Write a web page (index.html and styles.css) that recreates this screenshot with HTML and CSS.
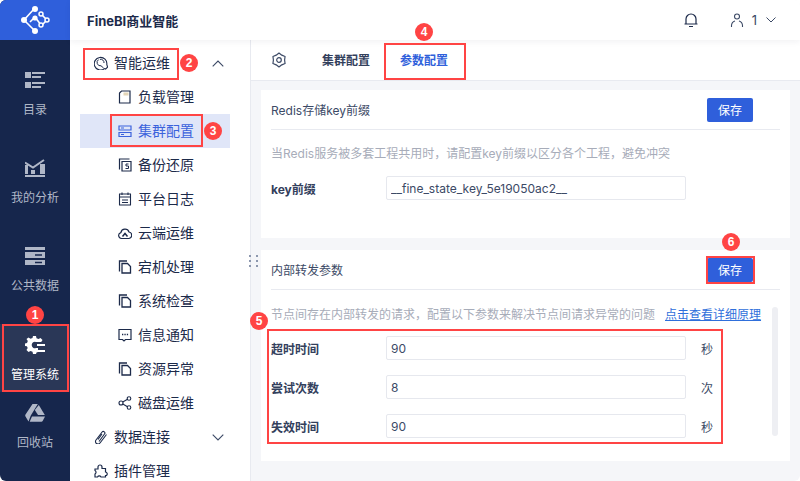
FILE: index.html
```html
<!DOCTYPE html>
<html lang="zh-CN">
<head>
<meta charset="utf-8">
<title>FineBI商业智能</title>
<link rel="stylesheet" href="styles.css">
</head>
<body>
<svg class="defs" aria-hidden="true">
  <symbol id="i-doc" viewBox="0 0 14 14"><path d="M1.500 11.500V1h7.500M4 13V3.500h5.500L12.500 6.500V13Z" fill="none" stroke="currentColor" stroke-width="1.300"/></symbol>
</svg>
<div class="app">
  <nav class="rail">
    <div class="logo">
      <svg class="logo-svg" viewBox="0 0 30 30"><g stroke="#fff" stroke-width="1.600" fill="none"><path d="M13 4 3 15l11 11M9 17l5-5 6 8"/><path d="M20 9l6 6-6 6"/></g><g fill="#fff"><circle cx="14" cy="4" r="3"/><circle cx="3" cy="15" r="3"/><circle cx="14" cy="26" r="3"/><circle cx="14" cy="13" r="2.600"/></g><g fill="#2f5fdb" stroke="#fff" stroke-width="1.500"><circle cx="20" cy="9" r="2"/><circle cx="26" cy="15" r="2"/><circle cx="20" cy="20" r="2"/></g></svg>
    </div>
    <a class="rail-item">
      <svg class="rail-icon" viewBox="0 0 20 18"><path fill="currentColor" d="M0 1h6v6H0zM7 1h13v2H7zM7 5h9v2H7zM0 11h6v6H0zM7 11h13v2H7zM7 15h9v2H7z"/></svg>
      <span>目录</span>
    </a>
    <a class="rail-item">
      <svg class="rail-icon" viewBox="0 0 20 18"><path fill="none" stroke="currentColor" stroke-width="2" d="M0 3.500 8 8.500 19 1"/><path fill="currentColor" d="M0 6h3v9H0zM6 11h4v4H6zM15 5h5v10h-5zM0 16h20v2H0z"/></svg>
      <span>我的分析</span>
    </a>
    <a class="rail-item">
      <svg class="rail-icon" viewBox="0 0 20 18"><path fill="currentColor" fill-rule="evenodd" d="M0 0h20v3H0zM0 5h20v6H0zM10 7.300v1.500h7V7.300zM0 13h20v5H0zM10 14.800v1.400h7v-1.400z"/></svg>
      <span>公共数据</span>
    </a>
    <a class="rail-item active">
      <svg class="rail-icon" viewBox="0 0 20 18"><path fill="currentColor" d="M8 0h3l.5 2.300 2 .8L15.500 2l2 2-1.300 2H11a3.200 3.200 0 1 0 0 6h2v4l-1.500.5L11 18H8l-.5-2.300-2-.8L3.500 16l-2-2 1.200-2-.8-1.800L0 10V7.500l2-.5.800-2L1.500 3l2-1.500 2 1.200 2-.8zM12 8h8v2h-8zM12 14h8v2h-8z"/></svg>
      <span>管理系统</span>
    </a>
    <a class="rail-item">
      <svg class="rail-icon" viewBox="0 0 20 18"><g fill="currentColor"><path d="M7.500 0h5.300L5.800 11.500 3.500 17.500.5 12.500a2 2 0 0 1 0-2z"/><path d="M13.800 1 19.800 11h-6.800L9.800 6z"/><path d="M7 12.600h13L17.800 16.800a2 2 0 0 1-1.500 1H4.700z"/></g></svg>
      <span>回收站</span>
    </a>
  </nav>

  <div class="main">
    <header class="topbar">
      <div class="brand">FineBI商业智能</div>
      <svg class="bell" viewBox="0 0 14 14"><path d="M2 11V6a5 5 0 0 1 10 0v5M.5 11h13M5 13.500h4" fill="none" stroke="currentColor" stroke-width="1.200"/></svg>
      <svg class="user" viewBox="0 0 14 14"><circle cx="7" cy="3.500" r="2.500" fill="none" stroke="currentColor" stroke-width="1.100"/><path d="M1.500 14v-1.500A5 5 0 0 1 5 8M12.500 14v-1.500A5 5 0 0 0 9 8" fill="none" stroke="currentColor" stroke-width="1.100"/></svg>
      <span class="user-name">1</span>
      <svg class="user-caret" viewBox="0 0 10 6"><path d="M.5.500 5 5 9.500.500" fill="none" stroke="currentColor"/></svg>
    </header>

    <div class="body">
      <aside class="sidebar">
        <div class="row top">
          <svg class="ico" viewBox="0 0 14 14"><path d="M10.500 12.600A6.300 6.300 0 1 1 12.800 8.500L13.600 11.200 11.600 13Z" fill="none" stroke="currentColor" stroke-width="1.100"/><path d="M4.600 3.600A3.400 3.400 0 0 0 7 9.800L9.600 12M6 3.300A3.400 3.400 0 0 1 10 7" fill="none" stroke="currentColor" stroke-width="1"/></svg>
          <span>智能运维</span>
          <svg class="caret" viewBox="0 0 12 7"><path d="M.7 6.300 6 1l5.300 5.300" fill="none" stroke="currentColor" stroke-width="1.100"/></svg>
        </div>
        <div class="row child">
          <svg class="ico" viewBox="0 0 14 14"><path d="M1.500 13V3l2-2h8.500v12Z" fill="none" stroke="currentColor" stroke-width="1.200"/><path d="M5.500 2.500h5v3h-5z" fill="#e4d6b8"/></svg>
          <span>负载管理</span>
        </div>
        <div class="row child selected">
          <svg class="ico" viewBox="0 0 14 14"><path d="M1 2h12v4H1zM1 8.500h12v4H1z" fill="none" stroke="currentColor" stroke-width="1.200"/><path d="M3 4h3M3 10.500h3" stroke="currentColor"/></svg>
          <span>集群配置</span>
        </div>
        <div class="row child">
          <svg class="ico" viewBox="0 0 14 14"><path d="M1.500 11.500V1h10M4 13V3.500h9V13Z" fill="none" stroke="currentColor" stroke-width="1.200"/><path d="M10.500 6H8v2h2.500v2.500H7.500" fill="none" stroke="currentColor"/></svg>
          <span>备份还原</span>
        </div>
        <div class="row child">
          <svg class="ico" viewBox="0 0 14 14"><path d="M1.500 2h11v11h-11zM1.500 5h11M4 .5V3M10 .5V3M4 8h6M4 10.500h6" fill="none" stroke="currentColor" stroke-width="1.100"/></svg>
          <span>平台日志</span>
        </div>
        <div class="row child">
          <svg class="ico" viewBox="0 0 14 14"><path d="M3.500 12.500a3 3 0 0 1-.6-5.900A4.200 4.200 0 0 1 11 6a3.300 3.300 0 0 1 0 6.500Z" fill="none" stroke="currentColor" stroke-width="1.200"/><path d="M4.500 10.500 7 7.500l2.500 3" fill="none" stroke="currentColor" stroke-width="1.500"/></svg>
          <span>云端运维</span>
        </div>
        <div class="row child"><svg class="ico"><use href="#i-doc"/></svg><span>宕机处理</span></div>
        <div class="row child"><svg class="ico"><use href="#i-doc"/></svg><span>系统检查</span></div>
        <div class="row child">
          <svg class="ico" viewBox="0 0 14 14"><path d="M1 1.500h12v10H7.500L6 13l-1.500-1.500H1Z" fill="none" stroke="currentColor" stroke-width="1.200"/><path d="M4 6.500h1.300M6.400 6.500h1.300M8.800 6.500h1.300" stroke="currentColor" stroke-width="1.300"/></svg>
          <span>信息通知</span>
        </div>
        <div class="row child"><svg class="ico"><use href="#i-doc"/></svg><span>资源异常</span></div>
        <div class="row child">
          <svg class="ico" viewBox="0 0 14 14"><g fill="none" stroke="currentColor" stroke-width="1.100"><circle cx="3" cy="7" r="2"/><circle cx="11" cy="2.500" r="1.800"/><circle cx="11" cy="11.500" r="1.800"/><path d="M4.800 6 9.500 3.300M4.800 8l4.700 2.700"/></g></svg>
          <span>磁盘运维</span>
        </div>
        <div class="row top">
          <svg class="ico" viewBox="0 0 14 14"><path d="M5 11.500 10.500 4a1.500 1.500 0 0 0-2.400-2L2 10a2.500 2.500 0 0 0 4 3l6.500-8.500M8 4l-4 5.500" fill="none" stroke="currentColor" stroke-width="1.100"/></svg>
          <span>数据连接</span>
          <svg class="caret" viewBox="0 0 12 7"><path d="M.7.700 6 6l5.300-5.300" fill="none" stroke="currentColor" stroke-width="1.100"/></svg>
        </div>
        <div class="row top">
          <svg class="ico" viewBox="0 0 14 14"><path d="M1 5h3V3a2 2 0 0 1 4 0v1.500h3.500V8a2 2 0 0 1 1 3.500h-1V13H7a2 2 0 0 0-3.500 0H1V10a2 2 0 0 0 0-3.500Z" fill="none" stroke="currentColor" stroke-width="1.200"/></svg>
          <span>插件管理</span>
        </div>
      </aside>

      <section class="content">
        <div class="tabs">
          <svg class="gear" viewBox="0 0 16 16"><path d="M8 1 10.800 3.150 14.060 4.500 13.600 8 14.060 11.500 10.800 12.850 8 15 5.200 12.850 1.940 11.500 2.400 8 1.940 4.500 5.200 3.150Z" fill="none" stroke="currentColor" stroke-width="1.200" stroke-linejoin="round"/><circle cx="8" cy="8" r="2.300" fill="none" stroke="currentColor" stroke-width="1.200"/></svg>
          <span class="tab">集群配置</span>
          <span class="tab current">参数配置</span>
        </div>
        <div class="panels">
          <div class="card first">
            <div class="card-head">
              <span>Redis存储key前缀</span>
              <button class="save">保存</button>
            </div>
            <p class="desc">当Redis服务被多套工程共用时，请配置key前缀以区分各个工程，避免冲突</p>
            <div class="field">
              <label>key前缀</label>
              <input class="input" value="__fine_state_key_5e19050ac2__">
            </div>
          </div>
          <div class="card second">
            <div class="card-head">
              <span>内部转发参数</span>
              <button class="save">保存</button>
            </div>
            <div class="scroll-area">
              <p class="desc">节点间存在内部转发的请求，配置以下参数来解决节点间请求异常的问题<a class="link">点击查看详细原理</a></p>
              <div class="field">
                <label>超时时间</label>
                <input class="input" value="90">
                <span class="unit">秒</span>
              </div>
              <div class="field">
                <label>尝试次数</label>
                <input class="input" value="8">
                <span class="unit">次</span>
              </div>
              <div class="field">
                <label>失效时间</label>
                <input class="input" value="90">
                <span class="unit">秒</span>
              </div>
              <div class="scrollbar"></div>
            </div>
          </div>
        </div>
      </section>
    </div>
  </div>

  <div class="grip"><i></i><i></i><i></i><i></i><i></i><i></i></div>

  <div class="mark m1"></div><div class="badge b1">1</div>
  <div class="mark m2"></div><div class="badge b2">2</div>
  <div class="mark m3"></div><div class="badge b3">3</div>
  <div class="mark m4"></div><div class="badge b4">4</div>
  <div class="mark m5"></div><div class="badge b5">5</div>
  <div class="mark m6"></div><div class="badge b6">6</div>
</div>
</body>
</html>
```

FILE: styles.css
```css
* { box-sizing: border-box; }
html, body { margin: 0; height: 100%; background: #fff; }
body { font-family: "Inter", "Noto Sans CJK SC", sans-serif; font-size: 12px; color: #1c2a4a; }
.defs { display: none; }

.app { position: relative; display: flex; width: 800px; height: 481px; overflow: hidden; border-radius: 6px; background: #fff; }

.rail { flex: 0 0 70px; background: #16264c; display: flex; flex-direction: column; overflow: hidden; }
.logo { flex: 0 0 40px; margin-bottom: 20px; background: #2f5fdb; display: flex; align-items: center; justify-content: center; }
.logo-svg { width: 30px; height: 30px; margin-left: 1px; }
.rail-item { flex: 0 0 68px; margin-bottom: 20px; padding-top: 11px; display: flex; flex-direction: column; align-items: center; gap: 11px; color: #b0b7c7; }
.rail-item span { line-height: 20px; font-size: 12px; }
.rail-icon { width: 20px; height: 18px; display: block; flex: none; }
.rail-item.active { margin-bottom: 0; padding-top: 12px; background: #2a3757; color: #fff; }
.rail-item.active + .rail-item { padding-top: 12px; }

.main { flex: 1; min-width: 0; display: flex; flex-direction: column; }
.topbar { position: relative; z-index: 2; flex: 0 0 40px; display: flex; align-items: center; padding-left: 17px; background: #fff; box-shadow: 0 2px 6px rgba(30, 40, 70, .06); }
.brand { flex: 1; font-size: 13px; font-weight: 700; color: #1c2a4a; }
.bell { width: 14px; height: 14px; margin-right: 32px; color: #1c2a4a; }
.user { width: 14px; height: 14px; color: #3c4a66; margin-right: 8px; }
.user-name { font-size: 13px; color: #3c4a66; margin-right: 9px; }
.user-caret { width: 10px; height: 6px; margin-right: 24px; color: #3c4a66; }

.body { flex: 1; min-height: 0; display: flex; }
.sidebar { flex: 0 0 181px; padding: 6px 20px 0 10px; border-right: 1px solid #e8eaf0; overflow: hidden; background: #fff; font-size: 14px; }
.row { height: 34px; display: flex; align-items: center; gap: 6px; color: #1c2a4a; white-space: nowrap; }
.row span { margin-bottom: 2px; }
.row.top { padding-left: 14px; }
.row.child { padding-left: 38px; }
.row.selected { background: #e0e6f8; color: #3b62dc; }
.ico { width: 14px; height: 14px; flex: 0 0 14px; }
.caret { width: 12px; height: 7px; margin-left: auto; margin-right: 6px; color: #3c4a66; }

.content { flex: 1; min-width: 0; display: flex; flex-direction: column; background: #f5f6f9; }
.tabs { flex: 0 0 41px; display: flex; align-items: center; padding-left: 20px; background: #fff; border-bottom: 1px solid #e8eaf0; }
.gear { width: 16px; height: 16px; color: #3c4a66; margin-right: 35px; }
.tab { font-size: 12px; font-weight: 700; color: #33405c; margin-right: 30px; margin-bottom: 2px; }
.tab.current { color: #2f5fdb; }

.panels { flex: 1; padding: 9px 10px 0; display: flex; flex-direction: column; gap: 12px; }
.card { background: #fff; padding: 0 10px; }
.card.first { height: 148px; }
.card.second { height: 211px; }
.card-head { height: 40px; display: flex; align-items: center; justify-content: space-between; border-bottom: 1px solid #e8eaf0; padding-right: 27px; font-size: 12px; color: #3c4a66; }
.save { width: 46px; height: 24px; padding: 0; border: 0; border-radius: 2px; background: #2f5fdb; color: #fff; font: inherit; font-size: 12px; }
.desc { margin: 0; height: 46px; line-height: 48px; color: #a7acb9; font-size: 12px; white-space: nowrap; }
.second .desc { line-height: 50px; }
.field { display: flex; align-items: center; height: 24px; margin-bottom: 15px; }
.field label { flex: 0 0 115px; font-weight: 700; font-size: 12px; color: #33405c; }
.input { width: 300px; height: 24px; padding: 0 4px; border: 1px solid #e6e8ee; border-radius: 2px; background: #fff; color: #3c4a66; font: inherit; font-size: 12px; outline: 0; }
.unit { margin-left: 15px; font-size: 12px; color: #3c4a66; }

.scroll-area { position: relative; }
.link { margin-left: 10px; color: #2f6fdb; text-decoration: underline; }
.scrollbar { position: absolute; right: 2px; top: 17px; width: 6px; height: 129px; border-radius: 3px; background: #eeeff3; }

.grip { position: absolute; z-index: 3; left: 249px; top: 255px; display: grid; grid-template-columns: 2px 2px; gap: 3px 5px; }
.grip i { width: 2px; height: 2px; background: #8c97ae; }

.mark { position: absolute; z-index: 3; border: 2px solid #f44; }
.m1 { left: 2px; top: 324px; width: 67px; height: 68px; }
.m2 { left: 83px; top: 48px; width: 96px; height: 32px; }
.m3 { left: 110px; top: 114px; width: 93px; height: 33px; }
.m4 { left: 384px; top: 43px; width: 82px; height: 37px; }
.m5 { left: 267px; top: 329px; width: 456px; height: 115px; }
.m6 { left: 706px; top: 256px; width: 49px; height: 28px; }

.badge { position: absolute; z-index: 3; width: 18px; height: 18px; margin: -9px 0 0 -9px; border-radius: 50%; background: #f44; color: #fff; font: 700 12px/18px "Liberation Sans", sans-serif; text-align: center; }
.b1 { left: 35px; top: 315px; }
.b2 { left: 189px; top: 63px; }
.b3 { left: 213px; top: 131px; }
.b4 { left: 424px; top: 32px; }
.b5 { left: 259px; top: 321px; }
.b6 { left: 731px; top: 242px; }
```
